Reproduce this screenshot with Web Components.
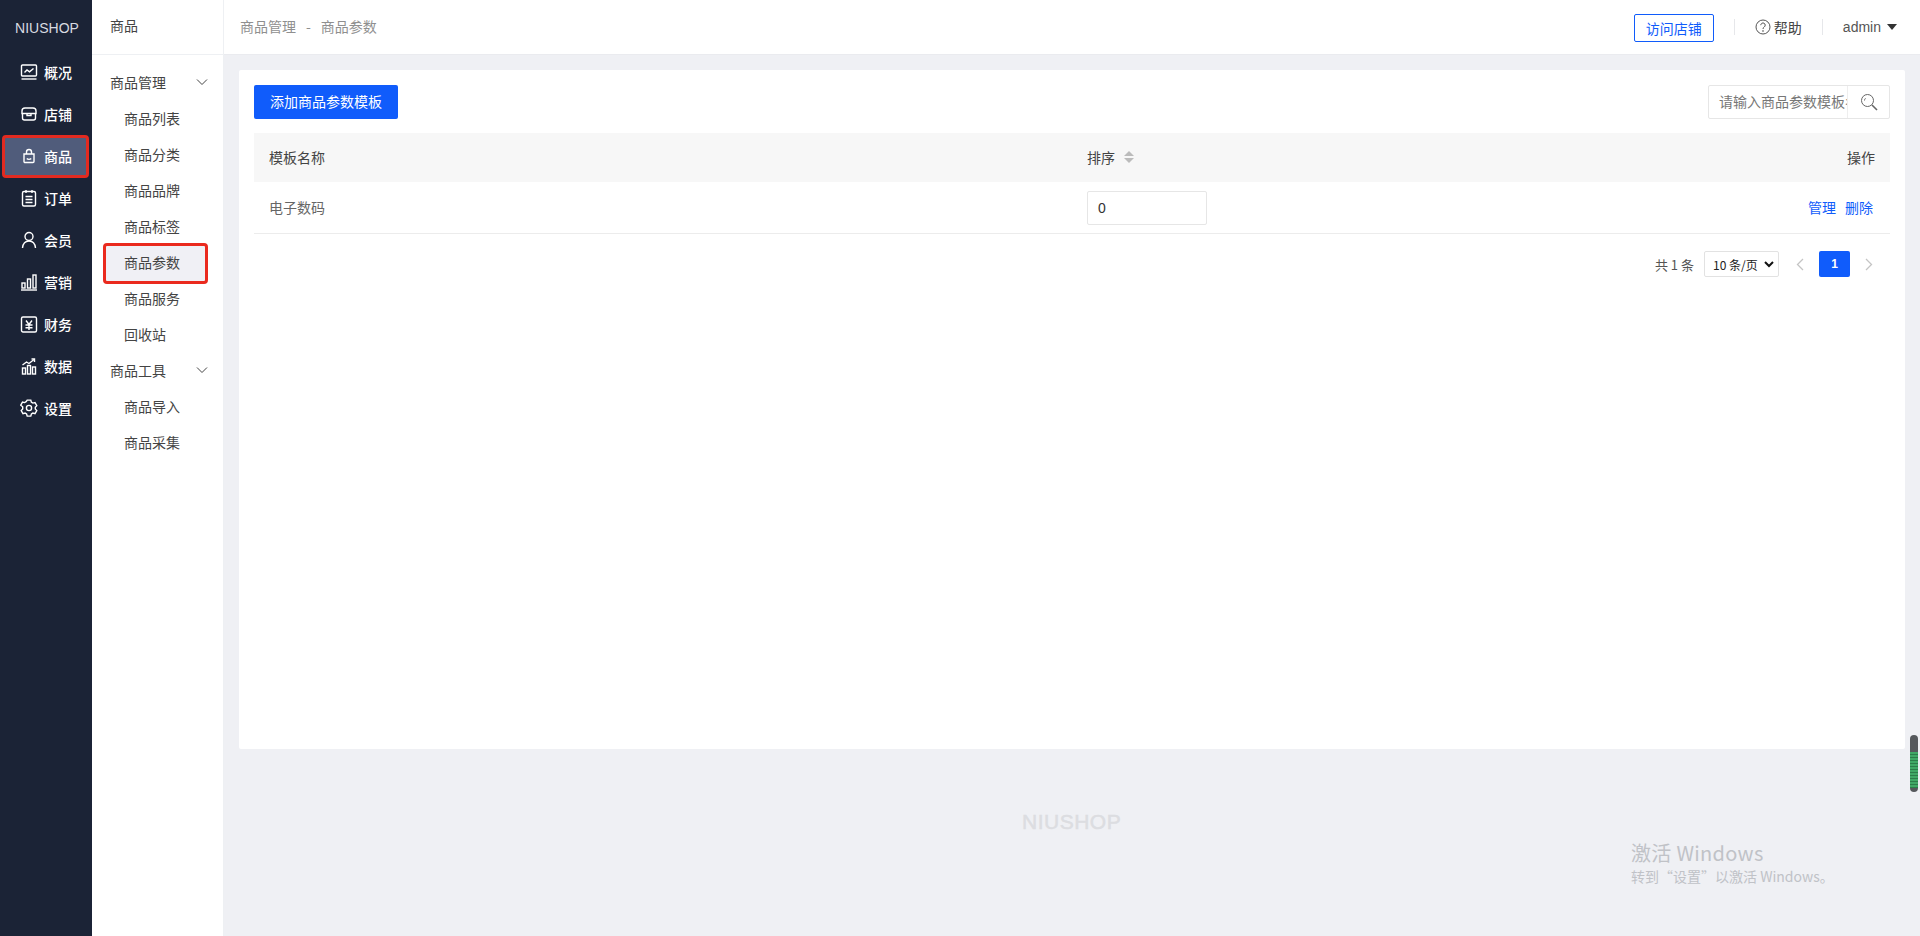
<!DOCTYPE html>
<html lang="zh-CN">

<head>
  <meta charset="UTF-8">
  <title>商品参数</title>
  <style>
    html, body {
      margin: 0;
      height: 100%;
      overflow: hidden;
    }

    body {
      font-family: "Noto Sans CJK SC", "Liberation Sans", sans-serif;
      font-size: 14px;
      background: #eff0f4;
      display: flex;
      position: relative;
    }
  </style>
</head>

<body>
  <ns-rail></ns-rail>
  <ns-submenu></ns-submenu>
  <ns-main>
    <ns-topbar slot="top"></ns-topbar>
    <ns-param-card></ns-param-card>
  </ns-main>
  <ns-desktop-overlay></ns-desktop-overlay>

  <script>
    const ICONS = {
      chart: '<rect x="1.5" y="2" width="15" height="11" rx="1"/><path d="M1.500 16h15"/><path d="M4.500 9.500l2.500-2.500 2.500 1.800 4-3.300"/>',
      store: '<path d="M5 3h8a3 3 0 0 1 3 3v2.500H2V6a3 3 0 0 1 3-3z"/><path d="M2.500 8.500V13a2 2 0 0 0 2 2h9a2 2 0 0 0 2-2V8.500"/><path d="M7 8.500v2h4v-2"/>',
      bag: '<path d="M4 7h10v7.500a1 1 0 0 1-1 1H5a1 1 0 0 1-1-1z"/><path d="M6.500 7V5a2.500 2.500 0 0 1 5 0v2"/><path d="M6.800 11.500c1 1.200 3.400 1.200 4.400 0"/>',
      order: '<rect x="2.500" y="2.500" width="13" height="14.500" rx="1.500"/><path d="M6 1v3M12 1v3M5.500 7.500h7M5.500 10.500h7M5.500 13.500h7"/>',
      user: '<circle cx="9" cy="5.500" r="4"/><path d="M2.500 17c.5-4.500 3-7 6.500-7s6 2.500 6.500 7"/>',
      bars: '<rect x="2" y="10" width="3" height="5"/><rect x="7.500" y="6" width="3" height="9"/><rect x="13" y="2" width="3" height="13"/><path d="M1 17h16"/>',
      finance: '<rect x="1.500" y="2" width="15" height="15" rx="1.500"/><path d="M6 5.500l3 4 3-4M5.500 10h7M5.500 12.700h7M9 9.500V15"/>',
      data: '<rect x="2.500" y="11" width="3" height="6"/><rect x="7.500" y="8.500" width="3" height="8.500"/><rect x="12.500" y="10" width="3" height="7"/><path d="M2.500 8l4-3 2.500 1.500 5-4"/><path d="M11.500 2h3v3"/>',
      gear: '<path d="M7.200 1.500h3.600l.6 2.100 1.500.9 2.100-.5 1.800 3.100-1.500 1.600v1.600l1.500 1.600-1.800 3.100-2.100-.5-1.500.9-.6 2.100H7.200l-.6-2.100-1.500-.9-2.100.5-1.800-3.100 1.500-1.600V8.200L.700 6.600l1.800-3.100 2.100.5 1.500-.9z" transform="translate(0 -.4)"/><circle cx="9" cy="9" r="2.600"/>'
    };

    class NsRail extends HTMLElement {
      constructor() {
        super();
        this.attachShadow({ mode: "open" });
      }

      connectedCallback() {
        const items = [
          ["chart", "概况"], ["store", "店铺"], ["bag", "商品", true], ["order", "订单"], ["user", "会员"],
          ["bars", "营销"], ["finance", "财务"], ["data", "数据"], ["gear", "设置"]
        ];
        this.shadowRoot.innerHTML = `
          <style>
            :host {
              display: block;
              width: 92px;
              flex: none;
              height: 100%;
              background: #1b2336;
              color: #fff;
            }
            .logo {
              height: 51px;
              display: flex;
              align-items: center;
              justify-content: center;
              padding: 5px 0 0 2px;
              box-sizing: border-box;
              font: 14px "Liberation Sans", sans-serif;
              color: #d8dae0;
            }
            .item {
              height: 42px;
              display: flex;
              align-items: center;
              padding-left: 20px;
              gap: 6px;
              position: relative;
              font-weight: 500;
            }
            svg {
              width: 18px;
              height: 18px;
              fill: none;
              stroke: #fff;
              stroke-width: 1.400;
            }
            .item span { position: relative; }
            .item svg { position: relative; }
            .active::before {
              content: "";
              position: absolute;
              left: 2px;
              top: 0;
              width: 87px;
              height: 43px;
              box-sizing: border-box;
              border: 3px solid #e22a20;
              border-radius: 4px;
              background: #505c7b;
            }
          </style>
          <div class="logo">NIUSHOP</div>
          ${items.map(([icon, label, active]) => `
            <div class="item ${active ? "active" : ""}">
              <svg viewBox="0 0 18 18">${ICONS[icon]}</svg><span>${label}</span>
            </div>`).join("")}
        `;
      }
    }

    class NsSubmenu extends HTMLElement {
      constructor() {
        super();
        this.attachShadow({ mode: "open" });
      }

      connectedCallback() {
        const group = (label) => `
          <div class="row group">${label}
            <svg viewBox="0 0 12 8"><path d="M1 1.500l5 5 5-5"/></svg>
          </div>`;
        const link = (label, active) => `<div class="row link ${active ? "active" : ""}"><span>${label}</span></div>`;
        this.shadowRoot.innerHTML = `
          <style>
            :host {
              display: block;
              width: 132px;
              flex: none;
              height: 100%;
              box-sizing: border-box;
              background: #fff;
              border-right: 1px solid #eef0f3;
              color: #444;
            }
            .title {
              height: 54px;
              line-height: 50px;
              padding-left: 18px;
              border-bottom: 1px solid #eef0f3;
            }
            .list { padding-top: 9px; }
            .row {
              height: 36px;
              display: flex;
              align-items: center;
              position: relative;
            }
            .group {
              padding-left: 18px;
              justify-content: space-between;
              padding-right: 15px;
              color: #444;
            }
            .group svg {
              width: 12px;
              height: 8px;
              fill: none;
              stroke: #444;
              stroke-width: 1;
            }
            .link { padding-left: 32px; color: #444; }
            .link span { position: relative; }
            .active::before {
              content: "";
              position: absolute;
              left: 11px;
              top: -1px;
              width: 105px;
              height: 41px;
              box-sizing: border-box;
              border: 3px solid #ea2a1e;
              border-radius: 4px;
              background: #f0f0f5;
            }
          </style>
          <div class="title">商品</div>
          <div class="list">
            ${group("商品管理")}
            ${link("商品列表")}${link("商品分类")}${link("商品品牌")}${link("商品标签")}
            ${link("商品参数", true)}${link("商品服务")}${link("回收站")}
            ${group("商品工具")}
            ${link("商品导入")}${link("商品采集")}
          </div>
        `;
      }
    }

    class NsMain extends HTMLElement {
      constructor() {
        super();
        this.attachShadow({ mode: "open" });
        this.shadowRoot.innerHTML = `
          <style>
            :host {
              display: flex;
              flex-direction: column;
              flex: 1;
              min-width: 0;
              height: 100%;
            }
            .body {
              padding: 15px;
            }
          </style>
          <slot name="top"></slot>
          <div class="body"><slot></slot></div>
        `;
      }
    }

    class NsTopbar extends HTMLElement {
      constructor() {
        super();
        this.attachShadow({ mode: "open" });
        this.shadowRoot.innerHTML = `
          <style>
            :host {
              display: flex;
              align-items: center;
              height: 55px;
              box-sizing: border-box;
              flex: none;
              background: #fff;
              border-bottom: 1px solid #eaebef;
              padding: 0 23px 1px 16px;
              color: #333;
              font-size: 14px;
            }
            .crumb { color: #8f8f8f; display: flex; gap: 10px; flex: 1; margin-top: -2px; }
            .visit {
              width: 80px;
              height: 28px;
              margin-top: 2px;
              box-sizing: border-box;
              border: 1px solid #105cfb;
              border-radius: 2px;
              color: #105cfb;
              display: flex;
              align-items: center;
              justify-content: center;
            }
            .sep { width: 1px; height: 16px; background: #e6e7ea; margin: 0 20px; }
            .help { display: flex; align-items: center; gap: 3px; color: #444; }
            .help svg { width: 16px; height: 16px; fill: none; stroke: #555; }
            .admin { font: 14px "Liberation Sans", sans-serif; color: #555; display: flex; align-items: center; gap: 6px; }
            .caret { width: 0; height: 0; border: 5px solid transparent; border-top: 6px solid #333; border-bottom: 0; }
          </style>
          <div class="crumb"><span>商品管理</span><span>-</span><span>商品参数</span></div>
          <div class="visit">访问店铺</div>
          <div class="sep"></div>
          <div class="help">
            <svg viewBox="0 0 16 16"><circle cx="8" cy="8" r="7"/><path d="M5.800 6.200a2.200 2.200 0 1 1 3.400 1.800c-.8.500-1.200 1-1.200 2"/><circle cx="8" cy="12" r=".4"/></svg>
            <span>帮助</span>
          </div>
          <div class="sep"></div>
          <div class="admin">admin<span class="caret"></span></div>
        `;
      }
    }

    class NsParamCard extends HTMLElement {
      constructor() {
        super();
        this.attachShadow({ mode: "open" });
        this.shadowRoot.innerHTML = `
          <style>
            :host {
              display: block;
              height: 679px;
              box-sizing: border-box;
              padding: 15px;
              background: #fff;
              color: #333;
              border-radius: 2px;
            }
            .bar {
              display: flex;
              justify-content: space-between;
              height: 34px;
              margin-bottom: 14px;
            }
            .add {
              width: 144px;
              height: 34px;
              box-sizing: border-box;
              padding-bottom: 2px;
              background: #105cfb;
              color: #fff;
              border-radius: 2px;
              display: flex;
              align-items: center;
              justify-content: center;
            }
            .search {
              width: 182px;
              height: 34px;
              box-sizing: border-box;
              border: 1px solid #e6e6e6;
              border-radius: 2px;
              display: flex;
            }
            .search .ph {
              width: 138px;
              padding-left: 10px;
              box-sizing: border-box;
              overflow: hidden;
              white-space: nowrap;
              line-height: 31px;
              color: #777;
            }
            .search .btn {
              flex: 1;
              border-left: 1px solid #eee;
              display: flex;
              align-items: center;
              justify-content: center;
            }
            .search svg { width: 18px; height: 18px; fill: none; stroke: #666; }
            .table-row {
              display: grid;
              grid-template-columns: 818px 1fr auto;
              align-items: center;
              padding: 0 15px;
              box-sizing: border-box;
            }
            .head { height: 49px; padding-bottom: 2px; background: #f7f7f7; color: #444; }
            .data { height: 52px; border-bottom: 1px solid #ececec; color: #666; }
            .data > div:first-child, .ops { margin-bottom: 2px; }
            .sort { display: flex; align-items: center; gap: 9px; }
            .arrows { display: flex; flex-direction: column; gap: 2px; }
            .arrows i { display: block; width: 0; height: 0; border: 5px solid transparent; }
            .arrows i:first-child { border-bottom: 5px solid #bbb; border-top: 0; }
            .arrows i:last-child { border-top: 5px solid #bbb; border-bottom: 0; }
            .num {
              width: 120px;
              height: 34px;
              box-sizing: border-box;
              border: 1px solid #e6e6e6;
              border-radius: 2px;
              padding-left: 10px;
              line-height: 33px;
              font-family: "Liberation Sans", sans-serif;
              color: #333;
            }
            .ops { display: flex; gap: 9px; color: #105cfb; margin-right: 2px; }
            .pager {
              display: flex;
              align-items: center;
              justify-content: flex-end;
              height: 26px;
              margin-top: 17px;
              padding-right: 17px;
              font-size: 13px;
              color: #555;
            }
            .count { margin-right: 10px; }
            .size {
              width: 75px;
              height: 26px;
              box-sizing: border-box;
              border: 1px solid #e2e2e2;
              border-radius: 2px;
              display: flex;
              align-items: center;
              justify-content: space-between;
              padding: 0 4px 0 8px;
              color: #222;
              margin-right: 17px;
              font-size: 12px;
            }
            .size svg { width: 10px; height: 7px; fill: none; stroke: #111; stroke-width: 2; }
            .page {
              width: 31px;
              height: 26px;
              margin: 0 15px;
              background: #105cfb;
              color: #fff;
              border-radius: 2px;
              display: flex;
              align-items: center;
              justify-content: center;
              font: bold 12px "Liberation Sans", sans-serif;
            }
            .nav { width: 8px; height: 13px; fill: none; stroke: #c4c4c4; stroke-width: 1.300; }
          </style>
          <div class="bar">
            <div class="add">添加商品参数模板</div>
            <div class="search">
              <div class="ph">请输入商品参数模板名称</div>
              <div class="btn">
                <svg viewBox="0 0 18 18"><circle cx="7.500" cy="7.500" r="6"/><path d="M12 12l5 5" stroke-width="1.600"/><path d="M4.500 7.500a3 3 0 0 1 1-2.200"/></svg>
              </div>
            </div>
          </div>
          <div class="table-row head">
            <div>模板名称</div>
            <div class="sort">排序<span class="arrows"><i></i><i></i></span></div>
            <div>操作</div>
          </div>
          <div class="table-row data">
            <div>电子数码</div>
            <div><div class="num">0</div></div>
            <div class="ops"><span>管理</span><span>删除</span></div>
          </div>
          <div class="pager">
            <span class="count">共 1 条</span>
            <div class="size">10 条/页<svg viewBox="0 0 10 7"><path d="M1 1l4 4 4-4"/></svg></div>
            <svg class="nav" viewBox="0 0 8 13"><path d="M7 1L1.500 6.500 7 12"/></svg>
            <div class="page">1</div>
            <svg class="nav" viewBox="0 0 8 13"><path d="M1 1l5.500 5.500L1 12"/></svg>
          </div>
        `;
      }
    }

    // things that lie over the page: footer mark, scrollbar widget, windows watermark
    class NsDesktopOverlay extends HTMLElement {
      constructor() {
        super();
        this.attachShadow({ mode: "open" });
        this.shadowRoot.innerHTML = `
          <style>
            :host { display: contents; }
            .mark {
              position: absolute;
              left: 1022px;
              top: 810px;
              font: 21px "Liberation Sans", sans-serif;
              -webkit-text-stroke: .5px #dcdde1;
              letter-spacing: .5px;
              color: #dcdde1;
            }
            .win {
              position: absolute;
              left: 1631px;
              top: 839px;
              color: #c0c2c7;
              font-size: 20px;
              line-height: 28px;
              letter-spacing: .3px;
            }
            .win small { display: block; font-size: 14px; line-height: 20px; margin-top: -1px; letter-spacing: 0; }
            .thumb {
              position: absolute;
              left: 1910px;
              top: 735px;
              width: 8px;
              height: 57px;
              border-radius: 4px;
              background: repeating-linear-gradient(#3fa866 0 2px, #2b7d4a 2px 3px) 0 17px / 100% 36px no-repeat, #55585c;
            }
          </style>
          <div class="mark">NIUSHOP</div>
          <div class="thumb"></div>
          <div class="win">激活 Windows<small>转到“设置”以激活 Windows。</small></div>
        `;
      }
    }

    customElements.define("ns-rail", NsRail);
    customElements.define("ns-submenu", NsSubmenu);
    customElements.define("ns-main", NsMain);
    customElements.define("ns-topbar", NsTopbar);
    customElements.define("ns-param-card", NsParamCard);
    customElements.define("ns-desktop-overlay", NsDesktopOverlay);
  </script>
</body>

</html>
